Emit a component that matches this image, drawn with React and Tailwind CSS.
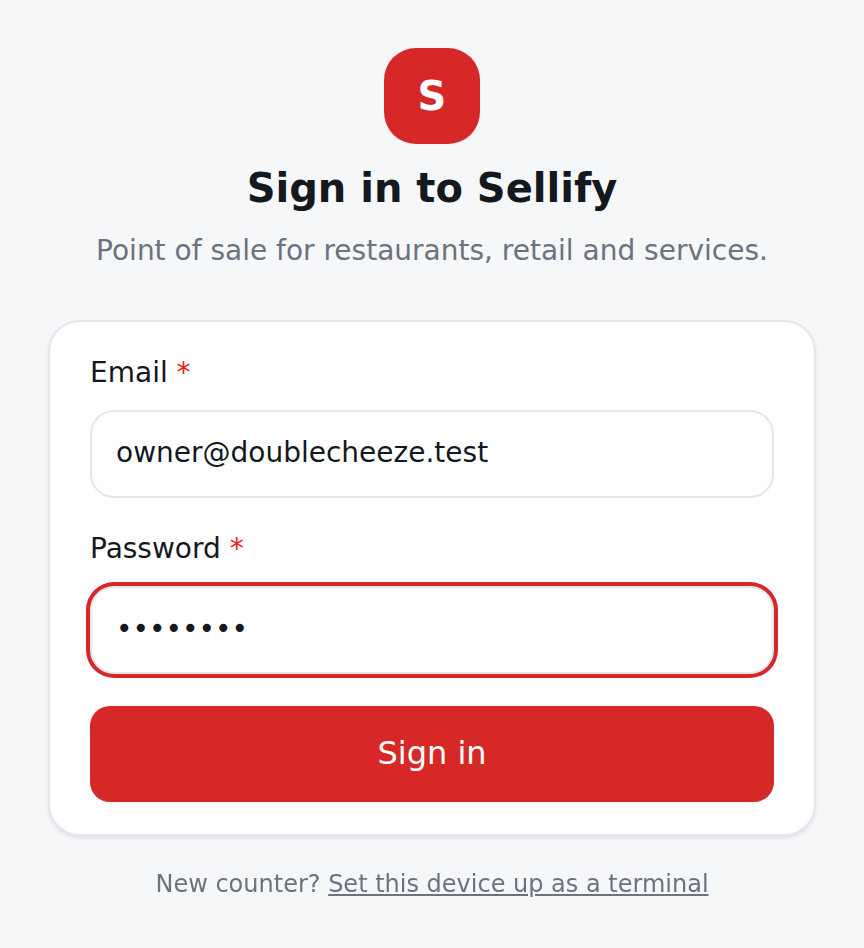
export default function App() {
  return (
    <div className="min-h-[948px] bg-[#f6f7f9] px-12 pt-12 font-['DejaVu_Sans',sans-serif] text-[#14181f]">
      <div className="flex flex-col items-center">
        <div className="flex h-24 w-24 items-center justify-center rounded-[32px] bg-[#d72828] text-[40px] font-bold leading-none text-white">S</div>
        <h1 className="mt-5 text-[40px] font-bold leading-[48px]">Sign in to Sellify</h1>
        <p className="mt-[19px] text-[28px] leading-10 text-[#6b7280]">Point of sale for restaurants, retail and services.</p>
      </div>
      <form className="mt-[49px] flex flex-col rounded-[32px] border-2 border-[#e3e6ed] bg-white px-10 pb-8 pt-8 shadow-[0_2px_4px_rgba(20,24,31,0.1)]">
        <label className="pb-[2px] text-[28px] leading-[38px]">Email <span className="text-[#e62020]">*</span></label>
        <input readOnly value="owner@doublecheeze.test" className="mt-4 h-[88px] w-full rounded-3xl border-2 border-[#e3e6ed] bg-white px-6 pb-[4px] text-[28px] outline-none" />
        <label className="mt-8 pb-[2px] text-[28px] leading-[38px]">Password <span className="text-[#e62020]">*</span></label>
        <input readOnly type="password" value="password" className="mt-4 h-[88px] w-full rounded-3xl border-2 border-[#e3e6ed] bg-white px-6 pb-[4px] text-[28px] outline-none ring-4 ring-[#d72828]" />
        <button type="button" className="mt-8 h-24 w-full rounded-[20px] bg-[#d72828] pb-[2px] text-[32px] text-white">Sign in</button>
      </form>
      <p className="mt-8 text-center text-[24px] leading-8 text-[#6b7280] will-change-transform">New counter? <a className="underline">Set this device up as a terminal</a></p>
    </div>
  );
}
